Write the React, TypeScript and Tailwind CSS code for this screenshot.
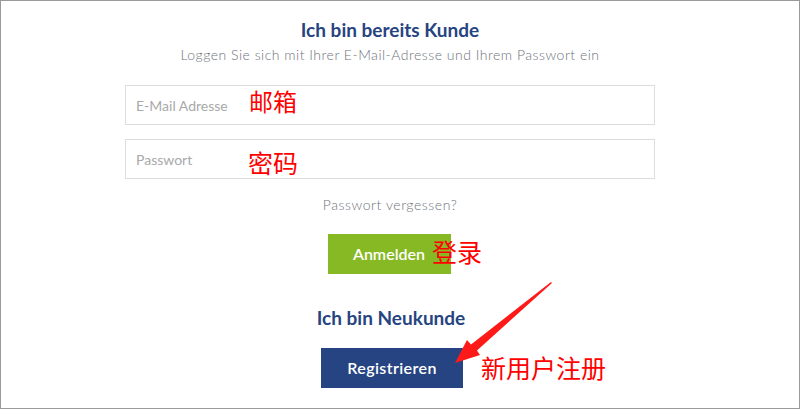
import React from "react";

export default function App() {
  const lato = { fontFamily: "Lato, 'Noto Sans', sans-serif" } as React.CSSProperties;
  const cjk = "font-['Noto_Sans_CJK_SC',sans-serif]";
  return (
    <div
      className="relative w-[800px] h-[409px] box-border border border-[#9a9a9a] bg-white overflow-hidden"
      style={lato}
    >
      <div className="ml-[124px] w-[530px] flex flex-col items-center pt-[18px]">
        <h1 className="text-[19px] leading-[21px] font-bold text-[#26447f]">Ich bin bereits Kunde</h1>
        <p className="mt-[5px] text-[14px] leading-[20px] font-light text-[#6e737c] tracking-[0.5px]">
          Loggen Sie sich mit Ihrer E-Mail-Adresse und Ihrem Passwort ein
        </p>
        <input
          className="mt-[20px] w-full h-[40px] box-border border border-[#dcdcdc] px-[10px] text-[14px] outline-none placeholder:text-[#a9a9a9]"
          placeholder="E-Mail Adresse"
          style={lato}
        />
        <input
          className="mt-[14px] w-full h-[40px] box-border border border-[#dcdcdc] px-[10px] text-[14px] outline-none placeholder:text-[#a9a9a9]"
          placeholder="Passwort"
          style={lato}
        />
        <p className="mt-[16px] text-[14px] leading-[20px] font-light text-[#6e737c] tracking-[0.55px]">
          Passwort vergessen?
        </p>
        <button className="mt-[19px] w-[123px] h-[40px] bg-[#87b924] text-white text-[16px] font-semibold -translate-x-[1px]">
          Anmelden
        </button>
        <h2 className="mt-[33px] text-[19px] leading-[21px] font-bold text-[#26447f] translate-x-[1px]">Ich bin Neukunde</h2>
        <button className="mt-[20px] w-[142px] h-[40px] bg-[#264482] text-white text-[16px] font-semibold tracking-[0.4px] translate-x-[2px]">
          Registrieren
        </button>
      </div>

      <span className={`absolute left-[248px] top-[86px] text-[24px] leading-[28px] text-[#ff0000] ${cjk}`}>邮箱</span>
      <span className={`absolute left-[247px] top-[146px] text-[25px] leading-[30px] text-[#ff0000] ${cjk}`}>密码</span>
      <span className={`absolute left-[431px] top-[235px] text-[25px] leading-[30px] text-[#ff0000] ${cjk}`}>登录</span>
      <span className={`absolute left-[480px] top-[351px] text-[25px] leading-[30px] text-[#ff0000] ${cjk}`}>新用户注册</span>

      <svg className="absolute left-0 top-0" width="800" height="409" viewBox="0 0 800 409">
        <polygon
          points="551,282 476,349.5 479,354 454,362 466,339 470,343.5 550,281"
          fill="#ff1a1a"
        />
      </svg>
    </div>
  );
}
